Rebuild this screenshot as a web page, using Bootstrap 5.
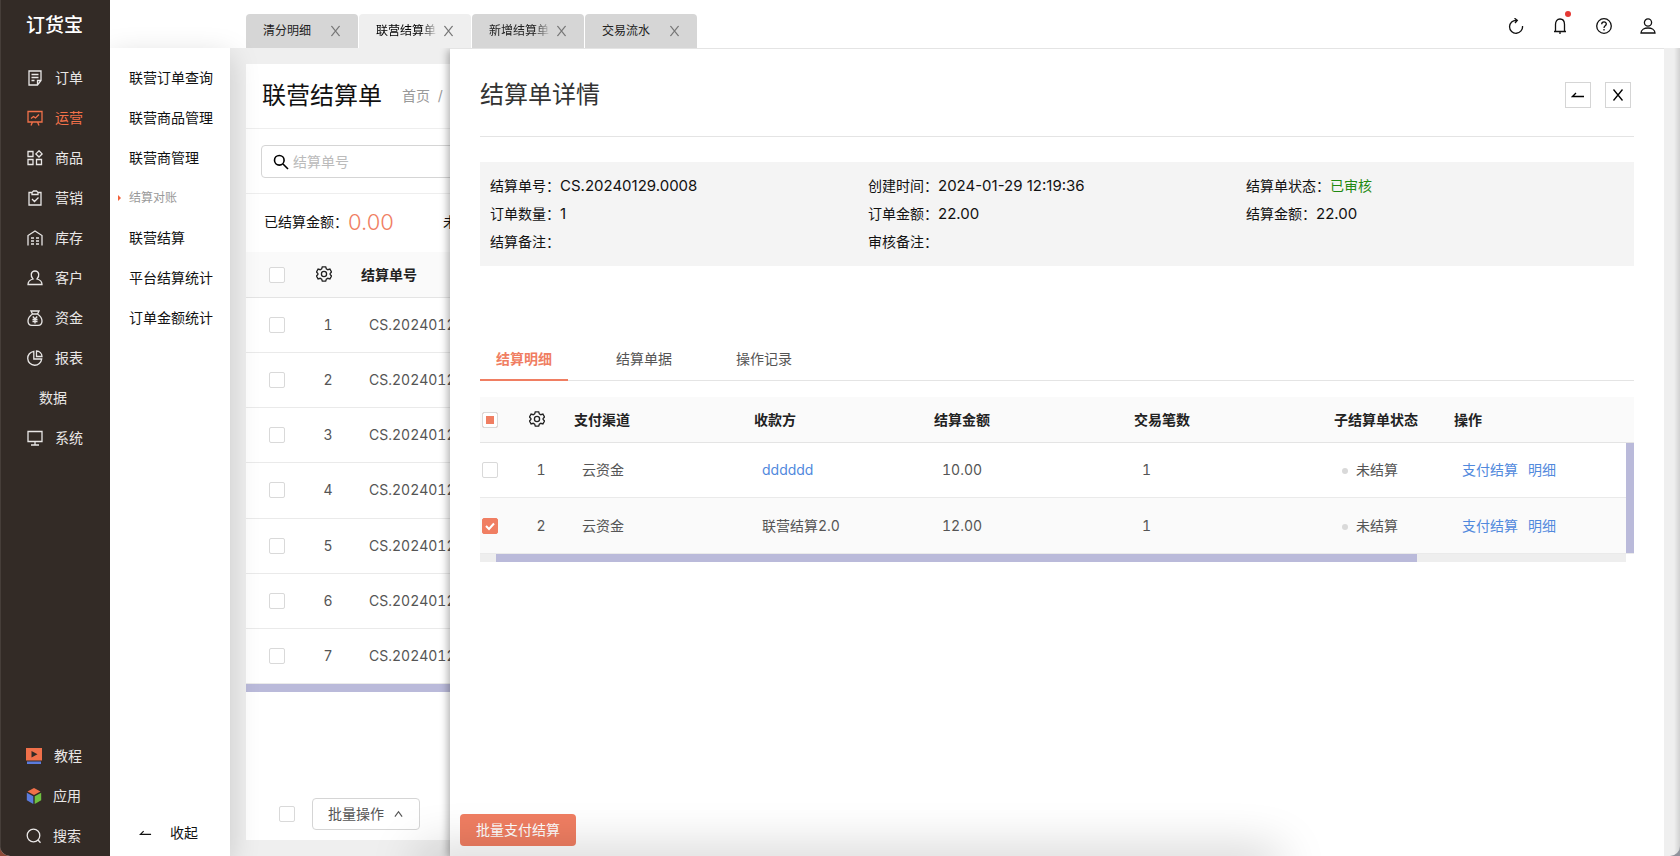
<!DOCTYPE html>
<html lang="zh-CN">
<head>
<meta charset="utf-8">
<meta name="viewport" content="width=device-width, initial-scale=1">
<title>结算单详情</title>
<link href="https://cdn.jsdelivr.net/npm/bootstrap@5.3.0/dist/css/bootstrap.min.css" rel="stylesheet">
<style>
  :root { --brand: #f07e62; --line: #e4e4e4; --thumb: #babada; --blue: #5189dd; }
  body { font: 14px/20px Inter, "Noto Sans CJK SC", sans-serif; color: #111; background: linear-gradient(90deg, #8c4a38 50%, #8f929b 50%); }
  a { text-decoration: none; color: inherit; }
  svg { display: block; flex: none; }
  .ico { width: 16px; height: 16px; fill: none; stroke: currentColor; stroke-width: 1.3; }
  .shell { border-radius: 0 0 10px 10px; background: #efefef; }

  .rail { width: 110px; background: #332b26; color: #e9e7e6; border-left: 1px solid #463e39; }
  .brand { height: 48px; font-size: 19px; line-height: 52px; font-weight: 500; color: #fff; padding-left: 25px; }
  .rail-link { height: 40px; padding-left: 26px; gap: 12px; }
  .rail-foot .rail-link { padding-left: 25px; }
  .rail-foot .rail-link + .rail-link { gap: 11px; }
  .rail-link.on { color: #f2714a; }
  .rail-link.bare { padding-left: 38px; }

  .topbar { height: 48px; background: #fff; padding-left: 136px; padding-right: 24px; }
  .page-tab { width: 112px; height: 34px; padding: 0 17px; border-radius: 4px 4px 0 0; background: #d6d6d6; font-size: 12px; color: #222; }
  .page-tab.on { background: #efefef; color: #000; }
  .page-tab span { width: 60px; overflow: hidden; white-space: nowrap; }
  .page-tab .fade-end { -webkit-mask-image: linear-gradient(90deg, #000 46px, transparent 62px); mask-image: linear-gradient(90deg, #000 46px, transparent 62px); }
  .plain { border: 0; background: none; padding: 0; color: inherit; }
  .page-tab .plain { color: #777; }
  .tools { gap: 28px; color: #111; padding-top: 4px; }
  .dot-red { width: 6px; height: 6px; border-radius: 50%; background: #e53935; top: -7px; right: -3px; }

  .submenu { width: 120px; background: #fff; box-shadow: 0 8px 28px rgba(0,0,0,.17); z-index: 3; }
  .submenu a { height: 40px; padding-left: 19px; white-space: nowrap; }
  .submenu a.on { font-size: 12px; color: #999; }
  .submenu a.on::before { content: ""; width: 0; margin-left: -11px; margin-right: 8px; border: 3px solid transparent; border-left-color: #f2603a; border-right: 0; }
  .collapse-btn { height: 46px; gap: 18px; padding-left: 29px; }

  .sheet { margin: 16px 16px 16px; background: #fff; }
  .sheet-head { height: 65px; padding-left: 16px; border-bottom: 1px solid #eee; }
  .crumb { color: #999; }
  .big { font-size: 24px; line-height: 32px; }
  .sheet-search { padding: 16px 15px 15px; border-bottom: 1px solid #eee; }
  .search-box { height: 33px; border: 1px solid #d5d5d5; border-radius: 4px; padding-left: 11px; gap: 2px; }
  .search-box input { border: 0; outline: 0; font-size: 14px; }
  .search-box input::placeholder { color: #bbb; }
  .totals { height: 58px; padding: 0 0 3px 18px; }
  .totals b { font: 300 22px/28px Inter, sans-serif; color: var(--brand); width: 95px; }

  .grid { width: 100%; table-layout: fixed; border-collapse: separate; border-spacing: 0; color: #555; font-variant-numeric: tabular-nums; }
  .grid th { height: 46px; background: #fafafa; color: #222; font-weight: 600; padding: 0 8px; border-bottom: 1px solid var(--line); white-space: nowrap; }
  .grid td { height: 55px; padding: 0 16px; border-bottom: 1px solid #eaeaea; white-space: nowrap; }
  .grid .num { width: 50px; padding: 0; text-align: center; }
  .grid th.num svg { margin: 0 auto 2px 13px; }
  .grid tr.picked td { background: #fafafa; height: 56px; }
  .back-grid { height: 432px; }
  .back-grid .pick { width: 57px; padding: 0 0 0 23px; }
  .front-grid .pick { width: 36px; padding: 0 0 0 2px; }
  .tick { appearance: none; display: block; width: 16px; height: 16px; margin: 0; border: 1px solid #d9d9d9; border-radius: 2px; background: #fff; flex: none; }
  .tick:checked { border-color: var(--brand); background: var(--brand) url("data:image/svg+xml,%3Csvg xmlns='http://www.w3.org/2000/svg' viewBox='0 0 14 14'%3E%3Cpath d='M3 7l3 3 5-5.500' fill='none' stroke='%23fff' stroke-width='2'/%3E%3C/svg%3E"); }
  .tick:indeterminate { background: var(--brand); box-shadow: inset 0 0 0 3px #fff; }
  .bar { height: 8px; background: var(--thumb); }
  .btn-batch { height: 32px; padding: 0 16px 0 15px; border: 1px solid #d5d5d5; border-radius: 4px; background: #fff; color: #555; gap: 10px; }

  .drawer { top: 0; bottom: 0; left: 220px; right: 16px; background: #fff; border-top: 1px solid var(--line); box-shadow: -2px 2px 8px rgba(0,0,0,.32); padding: 0 30px; z-index: 2; clip-path: inset(0 0 0 -20px); }
  .drawer-head { height: 88px; padding: 4px 3px 0 0; border-bottom: 1px solid var(--line); color: #333; }
  .sq { width: 26px; height: 26px; border: 1px solid #d5d5d5; background: #fff; padding: 0; color: #000; }
  .facts { margin: 25px 0 71px; background: #f4f4f4; padding: 10px; line-height: 28px; }
  .facts .fig { font-size: 15px; }
  .green { color: #1f8a12; }
  .subtabs { gap: 32px; border-bottom: 1px solid var(--line); color: #555; margin-bottom: 16px; }
  .subtabs a { height: 44px; padding: 12px 16px 0; margin-bottom: -1px; }
  .subtabs a.on { color: var(--brand); font-weight: 600; border-bottom: 2px solid var(--brand); }
  .blue { color: var(--blue); }
  .state::before { content: ""; display: inline-block; width: 6px; height: 6px; border-radius: 50%; background: #d9d9d9; margin: 0 8px 1px 0; }
  .vbar { width: 8px; top: 46px; bottom: 9px; right: 0; background: var(--thumb); }
  .hbar { margin-right: 8px; background: #eee; }
  .pay { left: 10px; bottom: 10px; height: 32px; padding: 0 16px; border: 0; border-radius: 4px; background: var(--brand); color: #fff; }
  .glow { left: 25%; right: 24%; bottom: -20px; height: 20px; border-radius: 20px; box-shadow: 0 0 48px 5px rgba(0,0,0,.22); z-index: 5; pointer-events: none; }
  .edge { top: 48px; right: 0; bottom: 0; width: 6px; background: linear-gradient(90deg, transparent, rgba(0,0,0,.12)); }
</style>
</head>
<body>
<svg class="d-none">
  <symbol id="gear" viewBox="0 0 16 16"><path d="M6.300 .8h3.400l.6 2 1.500.9 2.100-.6 1.600 2.900-1.400 1.500v1l1.400 1.500-1.600 2.900-2.100-.6-1.500.9-.6 2H6.300l-.6-2-1.500-.9-2.100.6L.5 10l1.400-1.500v-1L.5 6l1.600-2.900 2.100.6 1.500-.9z"/><circle cx="8" cy="8" r="2.600"/></symbol>
  <symbol id="cross" viewBox="0 0 12 12"><path d="M1.500 .5l9 11M10.500 .5l-9 11"/></symbol>
  <symbol id="back" viewBox="0 0 14 10"><path d="M13 6.500H1.500L5 3"/></symbol>
</svg>
<div class="shell vh-100 d-flex overflow-hidden position-relative">
  <nav class="rail d-flex flex-column flex-shrink-0">
    <div class="brand">订货宝</div>
    <div class="d-flex flex-column" style="padding-top:10px">
      <a href="#" class="rail-link d-flex align-items-center"><svg class="ico" viewBox="0 0 16 16"><path d="M2 1h12v9.500L10.500 15H2zM14 10.500h-3.500V15M4.500 4.500h7M4.500 7.500h7M4.500 10.500h3"/></svg>订单</a>
      <a href="#" class="rail-link on d-flex align-items-center"><svg class="ico" viewBox="0 0 16 16"><path d="M1 1.500h14v10.500H1zM4 8.500l2.500-2 2 1.500L12 4.500M5.500 12L4 15.500M10.500 12l1.500 3.500"/></svg>运营</a>
      <a href="#" class="rail-link d-flex align-items-center"><svg class="ico" viewBox="0 0 16 16"><path d="M1 1.500h5v5H1zM1 9.500h5v5H1zM9.500 9.500h5v5h-5zM12 .8l3.100 3.100L12 7 8.900 3.900z"/></svg>商品</a>
      <a href="#" class="rail-link d-flex align-items-center"><svg class="ico" viewBox="0 0 16 16"><path d="M5 2.500H2v12.500h12V2.500h-3M5 4.500v-2L6.500 1h3L11 2.500v2zM5 9l2.500 2.500L11.500 7.500"/></svg>营销</a>
      <a href="#" class="rail-link d-flex align-items-center"><svg class="ico" viewBox="0 0 16 16"><path d="M1 15.500V5.500L8 1l7 4.500v10M4 8h3M9 8h3M4 11h3M9 11h3M4 14h3M9 14h3"/></svg>库存</a>
      <a href="#" class="rail-link d-flex align-items-center"><svg class="ico" viewBox="0 0 16 16"><path d="M6 9C4.500 7.500 4 6 4.300 4 4.700 2 6 1 8 1s3.300 1 3.700 3c.3 2-.2 3.500-1.700 5 3.500 1 5 2.500 5 5.500H1C1 11.500 2.500 10 6 9z"/></svg>客户</a>
      <a href="#" class="rail-link d-flex align-items-center"><svg class="ico" viewBox="0 0 16 16"><path d="M5.500 4L4 1h8l-1.500 3zM5.500 4C2.500 6 1 8.500 1 11c0 3 2 4.300 4 4.300h6c2 0 4-1.300 4-4.300 0-2.500-1.500-5-4.500-7M5.800 6.500L8 9l2.200-2.500M8 9v4.500M5.500 9.500h5M5.500 11.500h5"/></svg>资金</a>
      <a href="#" class="rail-link d-flex align-items-center"><svg class="ico" viewBox="0 0 16 16"><path d="M6.800 1.300A7 7 0 1 0 14.700 9H6.800zM9.500 1v5.500H15A5.500 5.500 0 0 0 9.500 1z"/></svg>报表</a>
      <a href="#" class="rail-link bare d-flex align-items-center">数据</a>
      <a href="#" class="rail-link d-flex align-items-center"><svg class="ico" viewBox="0 0 16 16"><path d="M1 1.500h14v10H1zM8 11.500V15M4 15h8"/></svg>系统</a>
    </div>
    <div class="rail-foot mt-auto d-flex flex-column">
      <a href="#" class="rail-link d-flex align-items-center"><svg width="16" height="16" viewBox="0 0 16 16"><path fill="#f0704a" d="M0 0h16v12.500H0z"/><path fill="#332b26" d="M5.500 3v6.500l6-3.200z"/><path fill="#5b7bdc" d="M1 13.500h14V16H1z"/></svg>教程</a>
      <a href="#" class="rail-link d-flex align-items-center"><svg width="16" height="16" viewBox="0 0 16 16"><path fill="#f0704a" d="M8 0l6.500 3.500L8 7 1.500 3.500z"/><path fill="#5b7bdc" d="M.8 4.700l6.500 3.500V16L.8 12.300z"/><path fill="#6fc040" d="M15.200 4.700L8.700 8.200V16l6.500-3.700z"/></svg>应用</a>
      <a href="#" class="rail-link d-flex align-items-center"><svg class="ico" viewBox="0 0 16 16"><circle cx="7.500" cy="7.500" r="6.300"/><path d="M12 12l2.500 2.800"/></svg>搜索</a>
    </div>
  </nav>

  <div class="flex-fill d-flex flex-column overflow-hidden">
    <header class="topbar d-flex align-items-end justify-content-between flex-shrink-0">
      <div class="d-flex" style="gap:1px">
        <div class="page-tab d-flex align-items-center justify-content-between"><span>清分明细</span><button class="plain" aria-label="关闭"><svg class="ico" style="width:11px;height:12px" viewBox="0 0 12 12"><use href="#cross"/></svg></button></div>
        <div class="page-tab on d-flex align-items-center justify-content-between"><span class="fade-end">联营结算单</span><button class="plain" aria-label="关闭"><svg class="ico" style="width:11px;height:12px" viewBox="0 0 12 12"><use href="#cross"/></svg></button></div>
        <div class="page-tab d-flex align-items-center justify-content-between"><span class="fade-end">新增结算单</span><button class="plain" aria-label="关闭"><svg class="ico" style="width:11px;height:12px" viewBox="0 0 12 12"><use href="#cross"/></svg></button></div>
        <div class="page-tab d-flex align-items-center justify-content-between"><span>交易流水</span><button class="plain" aria-label="关闭"><svg class="ico" style="width:11px;height:12px" viewBox="0 0 12 12"><use href="#cross"/></svg></button></div>
      </div>
      <div class="tools d-flex align-self-center">
        <button class="plain" aria-label="刷新"><svg class="ico" viewBox="0 0 16 16"><path d="M8.500 2.300A6.500 6.500 0 1 0 14.500 8M6.500 .2l2.800 2.200-2.300 2.600"/></svg></button>
        <button class="plain position-relative" aria-label="消息"><svg class="ico" viewBox="0 0 16 16"><path d="M3.500 13.500V6.500C3.500 3.500 5 1 8 1s4.500 2.500 4.500 5.500v7M2 13.500h12M8 13.500v2.500"/></svg><i class="dot-red position-absolute"></i></button>
        <button class="plain" aria-label="帮助"><svg class="ico" viewBox="0 0 16 16"><circle cx="8" cy="8" r="7.300"/><path d="M5.700 6.300C5.700 3 10.400 3.200 10.300 6c0 1.800-2.300 1.900-2.300 4M8 11v1.400"/></svg></button>
        <button class="plain" aria-label="账户"><svg class="ico" viewBox="0 0 16 16"><circle cx="8" cy="4.500" r="3.600"/><path d="M1 15c0-6.700 14-6.700 14 0z"/></svg></button>
      </div>
    </header>

    <div class="flex-fill d-flex position-relative" style="min-height:0">
      <nav class="submenu d-flex flex-column flex-shrink-0">
        <div class="d-flex flex-column" style="padding-top:10px">
          <a href="#" class="d-flex align-items-center">联营订单查询</a>
          <a href="#" class="d-flex align-items-center">联营商品管理</a>
          <a href="#" class="d-flex align-items-center">联营商管理</a>
          <a href="#" class="on d-flex align-items-center">结算对账</a>
          <a href="#" class="d-flex align-items-center">联营结算</a>
          <a href="#" class="d-flex align-items-center">平台结算统计</a>
          <a href="#" class="d-flex align-items-center">订单金额统计</a>
        </div>
        <button class="plain collapse-btn mt-auto d-flex align-items-center"><svg class="ico" style="width:13px;height:10px" viewBox="0 0 14 10"><use href="#back"/></svg>收起</button>
      </nav>

      <div class="flex-fill d-flex position-relative" style="min-width:0">
        <main class="sheet flex-fill d-flex flex-column">
          <div class="sheet-head d-flex align-items-center"><h1 class="big m-0 fw-normal">联营结算单</h1><span class="crumb ms-3 ps-1">首页 &nbsp;/</span></div>
          <div class="sheet-search">
            <label class="search-box d-flex align-items-center"><svg class="ico" style="stroke:#000;stroke-width:1.600" viewBox="0 0 16 16"><circle cx="6.300" cy="6.300" r="4.800"/><path d="M10 10l5 5"/></svg><input type="text" placeholder="结算单号" aria-label="结算单号"></label>
          </div>
          <div class="totals d-flex align-items-center">已结算金额：<b>0.00</b>未</div>
          <table class="grid back-grid">
            <thead><tr><th class="pick"><input type="checkbox" class="tick" aria-label="全选"></th><th class="num"><svg class="ico"><use href="#gear"/></svg></th><th>结算单号</th></tr></thead>
            <tbody>
              <tr><td class="pick"><input type="checkbox" class="tick" aria-label="1"></td><td class="num">1</td><td>CS.2024012</td></tr>
              <tr><td class="pick"><input type="checkbox" class="tick" aria-label="2"></td><td class="num">2</td><td>CS.2024012</td></tr>
              <tr><td class="pick"><input type="checkbox" class="tick" aria-label="3"></td><td class="num">3</td><td>CS.2024012</td></tr>
              <tr><td class="pick"><input type="checkbox" class="tick" aria-label="4"></td><td class="num">4</td><td>CS.2024012</td></tr>
              <tr><td class="pick"><input type="checkbox" class="tick" aria-label="5"></td><td class="num">5</td><td>CS.2024012</td></tr>
              <tr><td class="pick"><input type="checkbox" class="tick" aria-label="6"></td><td class="num">6</td><td>CS.2024012</td></tr>
              <tr><td class="pick"><input type="checkbox" class="tick" aria-label="7"></td><td class="num">7</td><td>CS.2024012</td></tr>
            </tbody>
          </table>
          <div class="bar"></div>
          <div class="mt-auto d-flex align-items-center" style="padding:0 0 10px 33px;gap:17px">
            <input type="checkbox" class="tick" aria-label="全选">
            <button class="btn-batch d-flex align-items-center">批量操作<svg class="ico" style="width:9px;height:8px" viewBox="0 0 10 8"><path d="M1 7l4-5.500L9 7"/></svg></button>
          </div>
        </main>

        <section class="drawer position-absolute">
          <div class="drawer-head d-flex align-items-center justify-content-between">
            <h2 class="big m-0 fw-normal">结算单详情</h2>
            <div class="d-flex" style="gap:14px">
              <button class="sq d-flex align-items-center justify-content-center" aria-label="返回"><svg class="ico" style="width:14px;height:10px" viewBox="0 0 14 10"><use href="#back"/></svg></button>
              <button class="sq d-flex align-items-center justify-content-center" aria-label="关闭"><svg class="ico" style="width:12px;height:12px" viewBox="0 0 12 12"><use href="#cross"/></svg></button>
            </div>
          </div>
          <div class="facts">
            <div class="row g-0"><div class="col-4">结算单号：<span class="fig">CS.20240129.0008</span></div><div class="col-4">创建时间：<span class="fig">2024-01-29 12:19:36</span></div><div class="col-4">结算单状态：<span class="green">已审核</span></div></div>
            <div class="row g-0"><div class="col-4">订单数量：<span class="fig">1</span></div><div class="col-4">订单金额：<span class="fig">22.00</span></div><div class="col-4">结算金额：<span class="fig">22.00</span></div></div>
            <div class="row g-0"><div class="col-4">结算备注：</div><div class="col-4">审核备注：</div></div>
          </div>
          <nav class="subtabs d-flex"><a href="#" class="on">结算明细</a><a href="#">结算单据</a><a href="#">操作记录</a></nav>
          <div class="position-relative">
            <table class="grid front-grid">
              <colgroup><col style="width:36px"><col style="width:50px"><col style="width:180px"><col style="width:180px"><col style="width:200px"><col style="width:200px"><col style="width:120px"><col></colgroup>
              <thead><tr><th class="pick"><input type="checkbox" class="tick" id="all" aria-label="全选"></th><th class="num"><svg class="ico"><use href="#gear"/></svg></th><th>支付渠道</th><th>收款方</th><th>结算金额</th><th>交易笔数</th><th>子结算单状态</th><th>操作</th></tr></thead>
              <tbody>
                <tr><td class="pick"><input type="checkbox" class="tick" aria-label="1"></td><td class="num">1</td><td>云资金</td><td><a href="#" class="blue">dddddd</a></td><td>10.00</td><td>1</td><td class="state">未结算</td><td><a href="#" class="blue">支付结算</a><a href="#" class="blue" style="margin-left:10px">明细</a></td></tr>
                <tr class="picked"><td class="pick"><input type="checkbox" class="tick" checked aria-label="2"></td><td class="num">2</td><td>云资金</td><td>联营结算2.0</td><td>12.00</td><td>1</td><td class="state">未结算</td><td><a href="#" class="blue">支付结算</a><a href="#" class="blue" style="margin-left:10px">明细</a></td></tr>
              </tbody>
            </table>
            <div class="hbar"><div class="bar" style="width:80.400%;margin-left:16px"></div></div>
            <div class="vbar position-absolute"></div>
          </div>
          <button class="pay position-absolute">批量支付结算</button>
        </section>
      </div>
    </div>
  </div>
  <div class="edge position-absolute"></div>
  <div class="glow position-absolute"></div>
</div>
<script src="https://cdn.jsdelivr.net/npm/bootstrap@5.3.0/dist/js/bootstrap.bundle.min.js"></script>
<script>document.getElementById('all').indeterminate = true;</script>
</body>
</html>
